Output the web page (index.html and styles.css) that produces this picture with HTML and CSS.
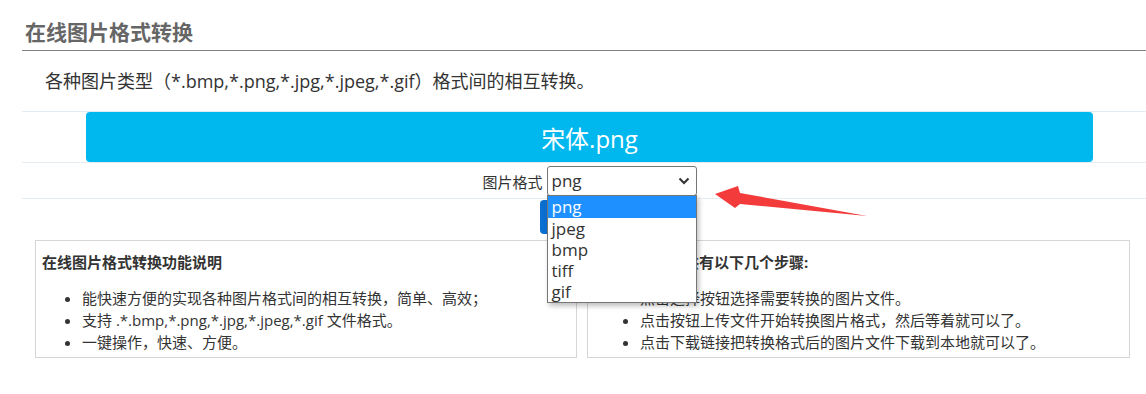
FILE: index.html
```html
<!DOCTYPE html>
<html lang="zh-CN">
<head>
<meta charset="utf-8">
<title>在线图片格式转换</title>
<link rel="stylesheet" href="styles.css">
</head>
<body>
<div class="page">
  <h2 class="title">在线图片格式转换</h2>
  <p class="desc">各种图片类型（*.bmp,*.png,*.jpg,*.jpeg,*.gif）格式间的相互转换。</p>
  <div class="form">
    <div class="row row-bar"><div class="filebar">宋体.png</div></div>
    <div class="row row-select">
      <span class="label">图片格式</span>
      <div class="select">
        <span class="select-value">png</span>
        <svg class="chevron" width="12" height="8" viewBox="0 0 12 8"><path d="M1.5 1.5 L6 6 L10.5 1.5" fill="none" stroke="#333" stroke-width="2"/></svg>
        <ul class="dropdown">
          <li class="opt opt-active">png</li>
          <li class="opt">jpeg</li>
          <li class="opt">bmp</li>
          <li class="opt">tiff</li>
          <li class="opt">gif</li>
        </ul>
      </div>
    </div>
    <div class="row row-btn"><button class="btn" aria-label="转换"></button></div>
  </div>
  <div class="boxes">
    <div class="box">
      <h4 class="box-title">在线图片格式转换功能说明</h4>
      <ul class="box-list">
        <li>能快速方便的实现各种图片格式间的相互转换，简单、高效；</li>
        <li>支持 .*.bmp,*.png,*.jpg,*.jpeg,*.gif 文件格式。</li>
        <li>一键操作，快速、方便。</li>
      </ul>
    </div>
    <div class="box">
      <h4 class="box-title">图片格式转换共有以下几个步骤:</h4>
      <ul class="box-list box-list-wide">
        <li>点击选择按钮选择需要转换的图片文件。</li>
        <li>点击按钮上传文件开始转换图片格式，然后等着就可以了。</li>
        <li>点击下载链接把转换格式后的图片文件下载到本地就可以了。</li>
      </ul>
    </div>
  </div>
  <svg class="arrow" width="160" height="36" viewBox="0 0 160 36">
    <polygon points="3,11 26,3 28,10 155,33 28,21 23,25" fill="#f43b3b"/>
  </svg>
</div>
</body>
</html>
```

FILE: styles.css
```css
* { box-sizing: border-box; }
body {
  margin: 0;
  background: #fff;
  font-family: "Open Sans", "Noto Sans CJK SC", sans-serif;
  color: #333;
}
.page {
  position: relative;
  padding-left: 22px;
  height: 394px;
  overflow: hidden;
}
.title {
  margin: 0;
  padding: 18px 0 4px 3px;
  font-size: 21px;
  line-height: 28px;
  font-weight: bold;
  color: #666;
  border-bottom: 1px solid #808080;
}
.desc {
  margin: 17px 0 17px 0;
  padding-left: 23px;
  font-size: 18px;
  line-height: 26px;
  color: #333;
}
.row {
  border-top: 1px solid #e6edf2;
  display: flex;
  justify-content: center;
  align-items: center;
  padding-left: 64px;
  padding-right: 64px;
  width: 1135px;
}
.row-bar { height: 51px; }
.filebar {
  width: 100%;
  height: 50px;
  background: #00b8ee;
  border-radius: 4px;
  color: #fff;
  font-size: 24px;
  display: flex;
  align-items: center;
  justify-content: center;
}
.row-select {
  height: 36px;
  gap: 4px;
  padding-top: 1px;
}
.label {
  font-size: 15px;
  color: #333;
}
.select {
  position: relative;
  width: 150px;
  height: 30px;
  border: 1px solid #767676;
  border-radius: 3px;
  display: flex;
  align-items: center;
  justify-content: space-between;
  padding: 0 6px 0 4px;
  font-size: 17px;
  color: #333;
}
.select-value { line-height: 20px; }
.chevron { display: block; }
.dropdown {
  position: absolute;
  top: 28px;
  left: -1px;
  width: 150px;
  margin: 0;
  padding: 0;
  list-style: none;
  background: #fff;
  border: 1px solid #767676;
  box-shadow: 2px 3px 5px rgba(0,0,0,0.25);
  z-index: 5;
}
.opt {
  height: 21px;
  line-height: 21px;
  padding-left: 4px;
  font-size: 17px;
  color: #333;
}
.opt-active {
  background: #1e90ff;
  color: #fff;
  height: 22px;
}
.row-btn {
  height: 37px;
  align-items: flex-start;
  padding-top: 1px;
}
.btn {
  width: 100px;
  height: 34px;
  border: none;
  border-radius: 4px;
  background: #0b6fd1;
  color: #fff;
  font-size: 15px;
  font-family: inherit;
}
.boxes {
  display: grid;
  grid-template-columns: 542px 543px;
  gap: 10px;
  margin: 5px 0 0 13px;
}
.box {
  border: 1px solid #d6d6d6;
  height: 118px;
  padding: 10px 7px 4px 6px;
}
.box-title {
  margin: 0;
  font-size: 15px;
  line-height: 22px;
  font-weight: bold;
  color: #333;
}
.box-list {
  margin: 14px 0 0 0;
  padding-left: 40px;
  font-size: 15px;
  line-height: 22px;
  color: #333;
}
.box-list-wide { padding-left: 46px; }
.arrow {
  position: absolute;
  left: 712px;
  top: 183px;
}
```
